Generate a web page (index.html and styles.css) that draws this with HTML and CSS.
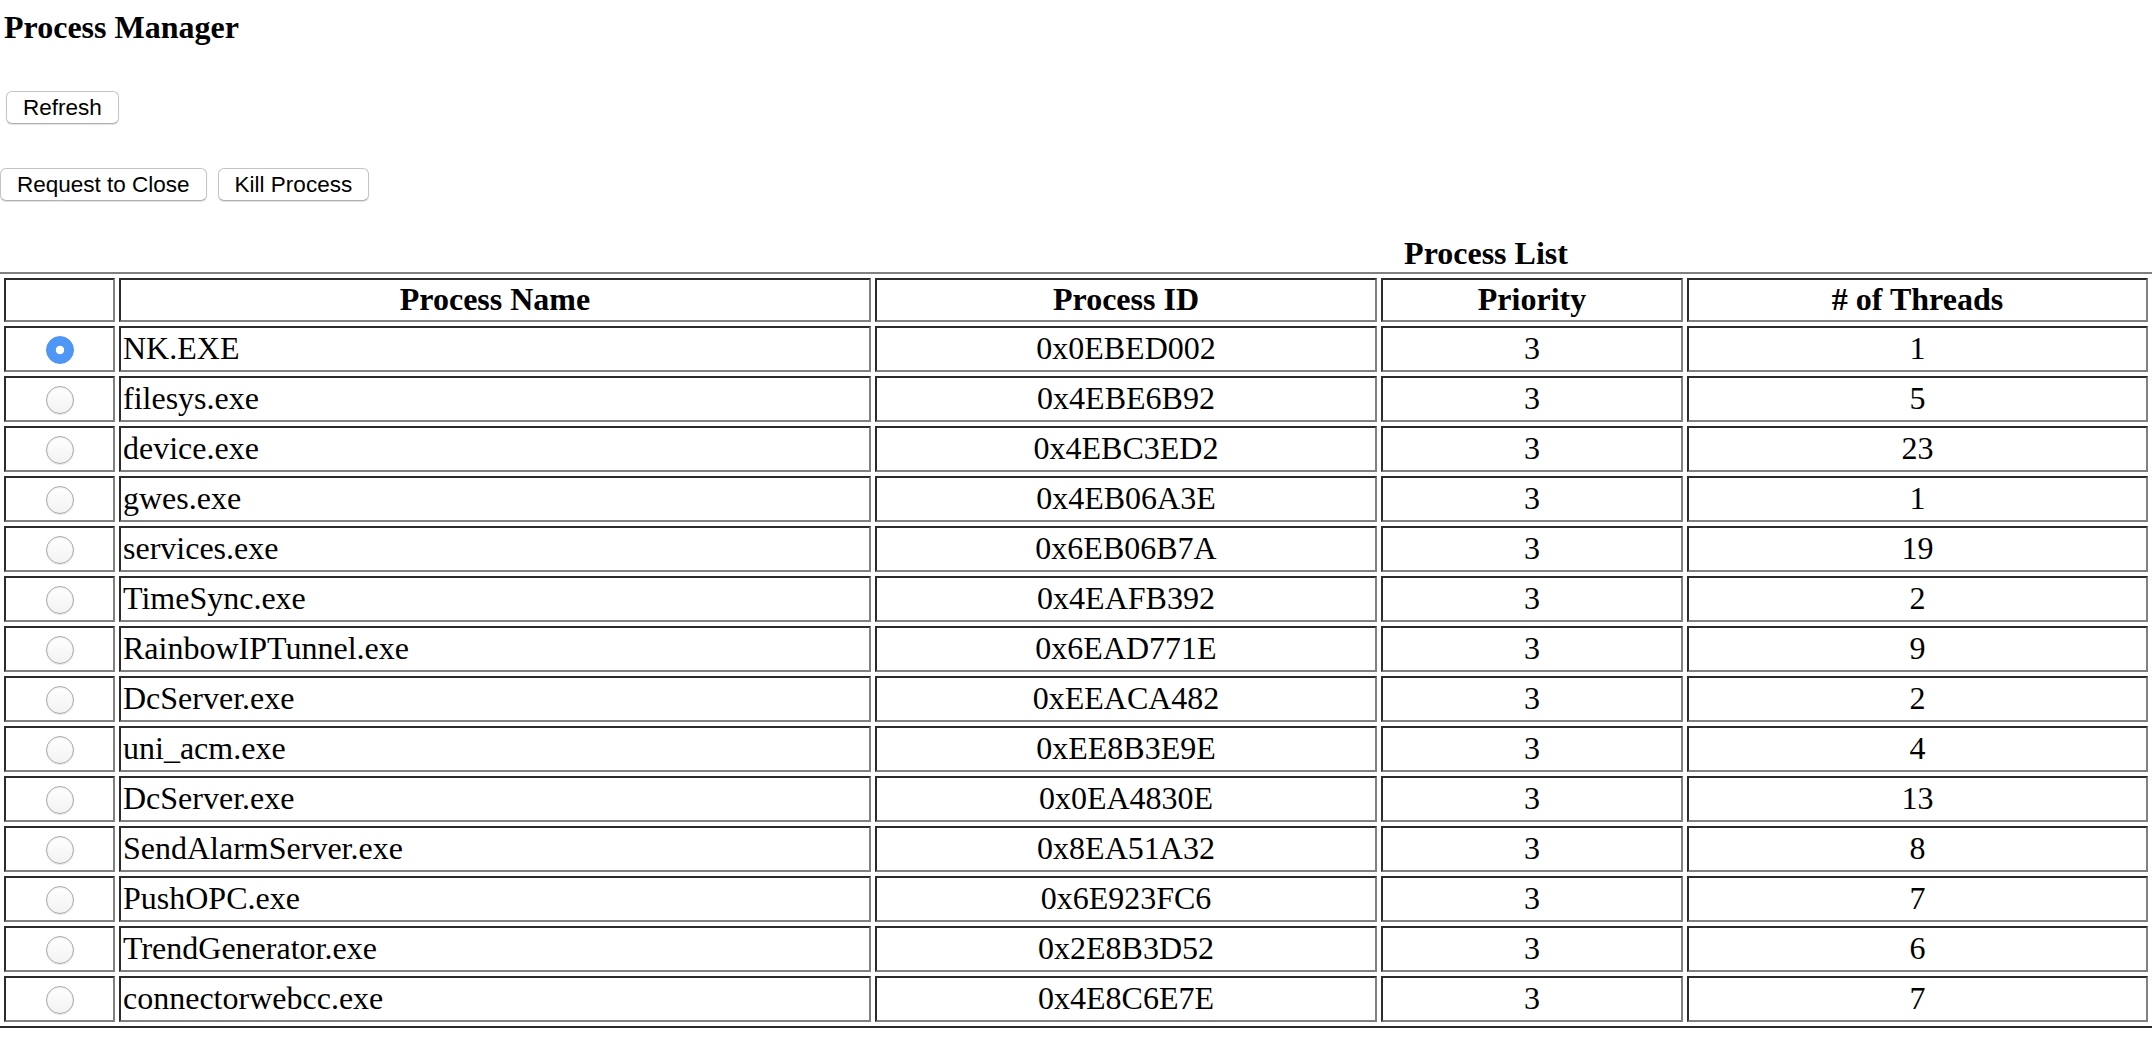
FILE: index.html
```html
<!DOCTYPE html>
<html>
<head>
<meta charset="utf-8">
<title>Process Manager</title>
<link rel="stylesheet" href="styles.css">
</head>
<body>
<div class="title">Process Manager</div>
<div class="toolbar toolbar-refresh">
  <button class="btn" type="button">Refresh</button>
</div>
<div class="toolbar toolbar-actions">
  <button class="btn" type="button">Request to Close</button>
  <button class="btn" type="button">Kill Process</button>
</div>
<table class="plist">
  <caption>Process List</caption>
  <thead>
    <tr class="head-row">
      <th class="c-sel"></th>
      <th class="c-name">Process Name</th>
      <th class="c-id">Process ID</th>
      <th class="c-pri">Priority</th>
      <th class="c-thr"># of Threads</th>
    </tr>
  </thead>
  <tbody>
    <tr><td class="sel"><input type="radio" name="proc" class="radio" checked></td><td class="name">NK.EXE</td><td class="num">0x0EBED002</td><td class="num">3</td><td class="num">1</td></tr>
    <tr><td class="sel"><input type="radio" name="proc" class="radio"></td><td class="name">filesys.exe</td><td class="num">0x4EBE6B92</td><td class="num">3</td><td class="num">5</td></tr>
    <tr><td class="sel"><input type="radio" name="proc" class="radio"></td><td class="name">device.exe</td><td class="num">0x4EBC3ED2</td><td class="num">3</td><td class="num">23</td></tr>
    <tr><td class="sel"><input type="radio" name="proc" class="radio"></td><td class="name">gwes.exe</td><td class="num">0x4EB06A3E</td><td class="num">3</td><td class="num">1</td></tr>
    <tr><td class="sel"><input type="radio" name="proc" class="radio"></td><td class="name">services.exe</td><td class="num">0x6EB06B7A</td><td class="num">3</td><td class="num">19</td></tr>
    <tr><td class="sel"><input type="radio" name="proc" class="radio"></td><td class="name">TimeSync.exe</td><td class="num">0x4EAFB392</td><td class="num">3</td><td class="num">2</td></tr>
    <tr><td class="sel"><input type="radio" name="proc" class="radio"></td><td class="name">RainbowIPTunnel.exe</td><td class="num">0x6EAD771E</td><td class="num">3</td><td class="num">9</td></tr>
    <tr><td class="sel"><input type="radio" name="proc" class="radio"></td><td class="name">DcServer.exe</td><td class="num">0xEEACA482</td><td class="num">3</td><td class="num">2</td></tr>
    <tr><td class="sel"><input type="radio" name="proc" class="radio"></td><td class="name">uni_acm.exe</td><td class="num">0xEE8B3E9E</td><td class="num">3</td><td class="num">4</td></tr>
    <tr><td class="sel"><input type="radio" name="proc" class="radio"></td><td class="name">DcServer.exe</td><td class="num">0x0EA4830E</td><td class="num">3</td><td class="num">13</td></tr>
    <tr><td class="sel"><input type="radio" name="proc" class="radio"></td><td class="name">SendAlarmServer.exe</td><td class="num">0x8EA51A32</td><td class="num">3</td><td class="num">8</td></tr>
    <tr><td class="sel"><input type="radio" name="proc" class="radio"></td><td class="name">PushOPC.exe</td><td class="num">0x6E923FC6</td><td class="num">3</td><td class="num">7</td></tr>
    <tr><td class="sel"><input type="radio" name="proc" class="radio"></td><td class="name">TrendGenerator.exe</td><td class="num">0x2E8B3D52</td><td class="num">3</td><td class="num">6</td></tr>
    <tr><td class="sel"><input type="radio" name="proc" class="radio"></td><td class="name">connectorwebcc.exe</td><td class="num">0x4E8C6E7E</td><td class="num">3</td><td class="num">7</td></tr>
  </tbody>
</table>
</body>
</html>
```

FILE: styles.css
```css
html, body {
  margin: 0;
  padding: 0;
  background: #ffffff;
  overflow: hidden;
}

body {
  font-family: "Liberation Serif", "Times New Roman", serif;
  font-size: 32px;
  color: #000000;
}

.title {
  font-weight: bold;
  font-size: 32px;
  line-height: 37px;
  padding: 9px 0 0 4px;
}

.toolbar {
  display: flex;
  align-items: center;
  gap: 11px;
}

.toolbar-refresh {
  margin-top: 45px;
  padding-left: 6px;
}

.toolbar-actions {
  margin-top: 44px;
}

.btn {
  font-family: "Liberation Sans", Arial, sans-serif;
  font-size: 22.5px;
  line-height: 27px;
  color: #000000;
  background: #ffffff;
  border: 1px solid #c4c4c4;
  border-bottom-color: #b0b0b0;
  border-radius: 6px;
  padding: 2px 16px 2px 16px;
  margin: 0;
  box-shadow: 0 1px 1px rgba(0, 0, 0, 0.12);
  cursor: default;
}

.plist {
  margin-top: 34px;
  width: 2152px;
  table-layout: fixed;
  border-collapse: separate;
  border-spacing: 4px;
  border-top: 2px solid #808080;
  border-bottom: 2px solid #2b2b2b;
  border-left: 0;
  border-right: 0;
}

.plist caption {
  caption-side: top;
  font-weight: bold;
  font-size: 32px;
  line-height: 37px;
  padding-left: 820px;
  text-align: center;
}

.plist th,
.plist td {
  border-style: solid;
  border-width: 2px;
  border-color: #2b2b2b #808080 #808080 #2b2b2b;
  padding: 0 2px 2px 2px;
  line-height: 36px;
  vertical-align: middle;
  white-space: nowrap;
  overflow: hidden;
}

.plist th {
  font-weight: bold;
  text-align: center;
}

.head-row {
  height: 44px;
}

.plist tbody tr {
  height: 46px;
}

.c-sel { width: 103px; }
.c-name { width: 744px; }
.c-id { width: 494px; }
.c-pri { width: 294px; }
.c-thr { width: 453px; }

.sel {
  text-align: center;
}

.name {
  text-align: left;
}

.num {
  text-align: center;
}

.radio {
  -webkit-appearance: none;
  appearance: none;
  width: 28px;
  height: 28px;
  margin: 0;
  padding: 0;
  border-radius: 50%;
  border: 1.5px solid #a9a9a9;
  background: linear-gradient(#ffffff, #f2f2f2);
  box-shadow: inset 0 1px 2px rgba(0, 0, 0, 0.08), 0 1px 1px rgba(0, 0, 0, 0.1);
  vertical-align: middle;
  position: relative;
  top: -2px;
  box-sizing: border-box;
}

.radio:checked {
  border-color: #4a92f0;
  background: radial-gradient(circle, #ffffff 0, #ffffff 3.8px, #4f97f6 4.6px);
  box-shadow: none;
}
```
